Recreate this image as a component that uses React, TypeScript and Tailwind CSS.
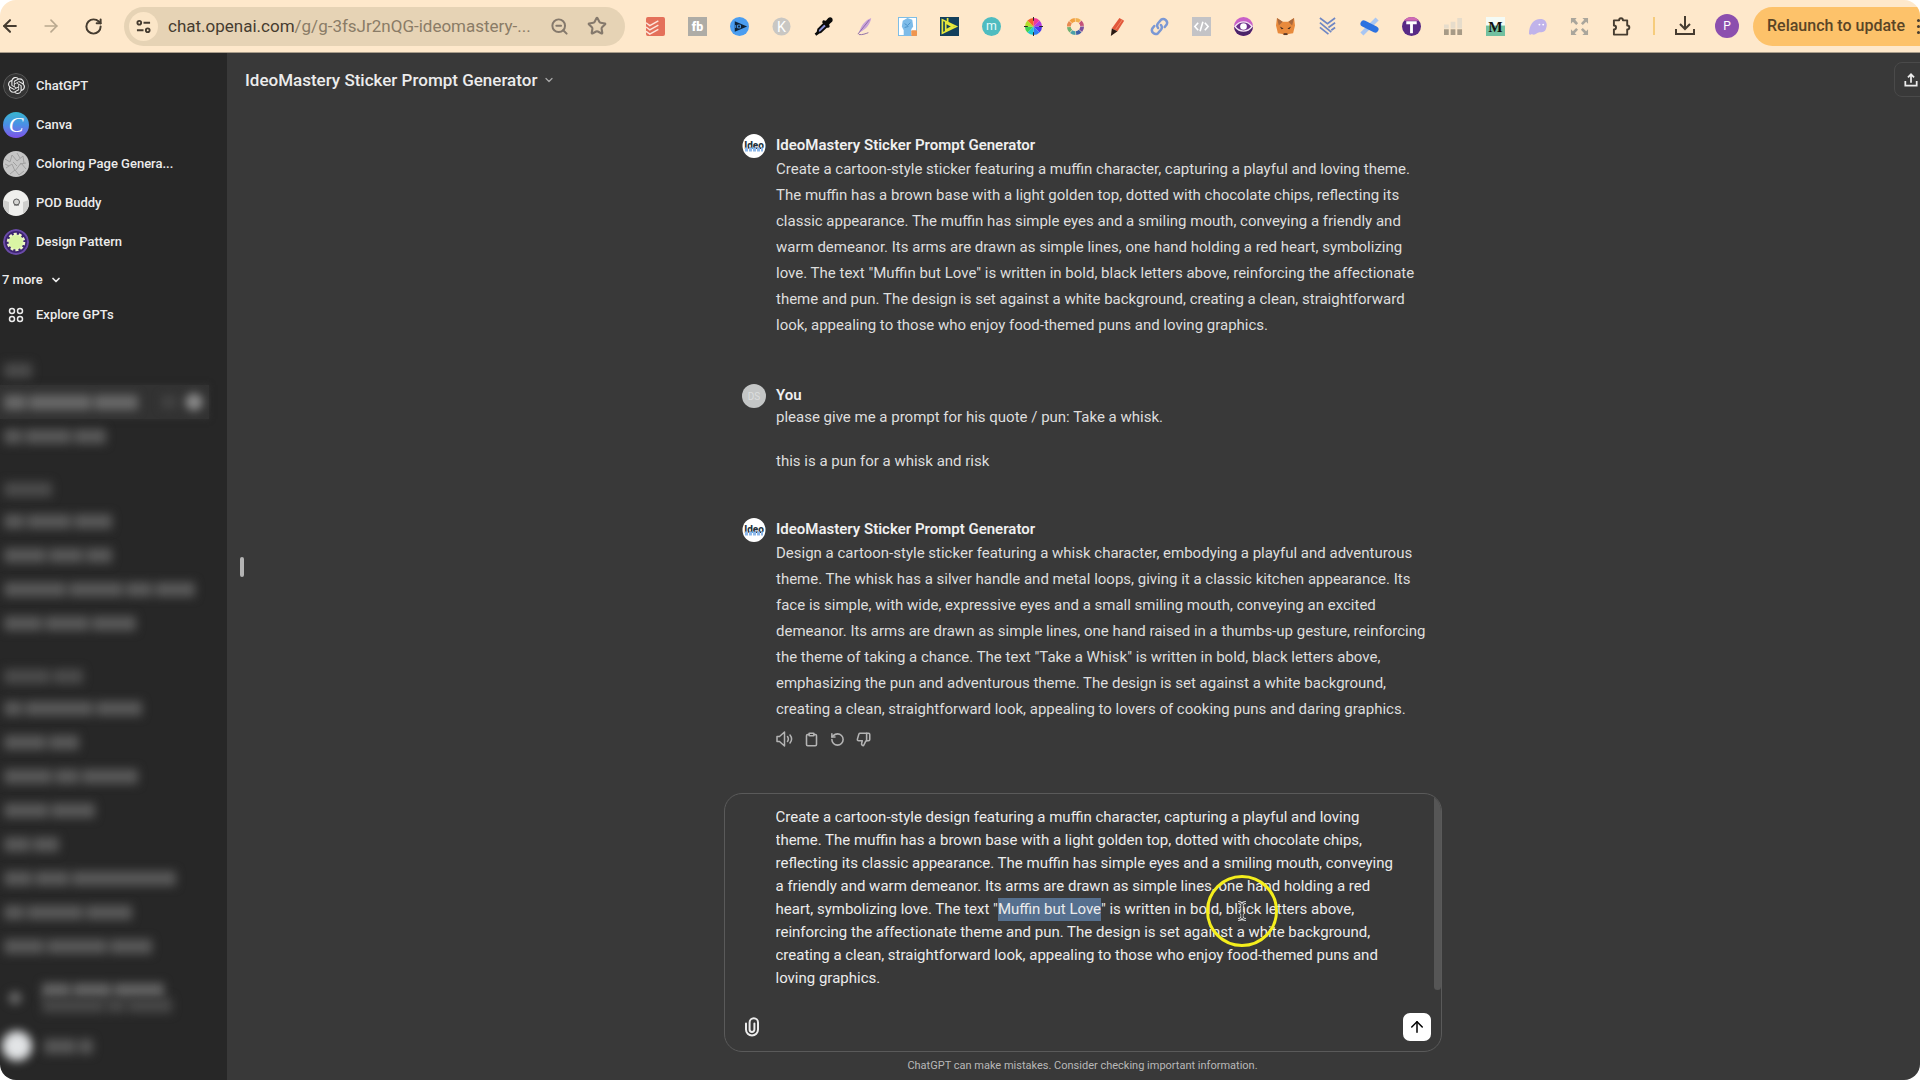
import { useEffect, useRef, type ReactNode } from "react";
import {
    ArrowLeft,
    ArrowRight,
    ArrowUp,
    ChevronDown,
    Clipboard,
    RotateCcw,
    RotateCw,
    Star,
    ThumbsDown,
    ZoomOut,
} from "lucide-react";
import { SiOpenai } from "react-icons/si";

const DRAFT =
    'Create a cartoon-style design featuring a muffin character, capturing a playful and loving theme. The muffin has a brown base with a light golden top, dotted with chocolate chips, reflecting its classic appearance. The muffin has simple eyes and a smiling mouth, conveying a friendly and warm demeanor. Its arms are drawn as simple lines, one hand holding a red heart, symbolizing love. The text "Muffin but Love" is written in bold, black letters above, reinforcing the affectionate theme and pun. The design is set against a white background, creating a clean, straightforward look, appealing to those who enjoy food-themed puns and loving graphics.';
const SELECTED = "Muffin but Love";

function Ext({ label, children }: { label: string; children: ReactNode }) {
    return (
        <button type="button" aria-label={label} className="shrink-0">
            <svg viewBox="0 0 20 20" className="h-[19px] w-[19px]">
                {children}
            </svg>
        </button>
    );
}

const wheel = ["#f0389a", "#b13be0", "#4a36f0", "#2e7ff5", "#1fc9d6", "#3fd452", "#b4dd2a", "#f5622a"];
const ring = ["#f0b050", "#c4527a", "#7a4f9e", "#3e5fa8", "#4aa0a8", "#6fb070", "#e88850", "#f2a040"];

function Extensions() {
    return (
        <div className="ml-[21px] flex items-center gap-[23px]">
            <Ext label="Todoist">
                <rect width="20" height="20" rx="2" fill="#e4705a" />
                <path d="M0 6l4 3 9-5M0 10.500l4 3 9-5M0 15l4 3 9-5" fill="none" stroke="#fde6dc" strokeWidth="1.500" />
            </Ext>
            <Ext label="Fb tool">
                <rect width="20" height="20" fill="#aeaca6" />
                <text x="10" y="15" textAnchor="middle" fontSize="13" fontWeight="900" fill="#fff">fb</text>
            </Ext>
            <Ext label="Video IQ">
                <circle cx="10" cy="10" r="10" fill="#4a9df0" />
                <path d="M5 4.500L18 10 5 15.500z" fill="#0f2236" />
                <path d="M6 8.500v3M8 8.500h3v3H8z" fill="none" stroke="#4a9df0" strokeWidth="1" />
            </Ext>
            <Ext label="Keywords">
                <circle cx="10" cy="10" r="9.500" fill="#c9c7c3" />
                <text x="10" y="15.500" textAnchor="middle" fontSize="15" fill="#fff">K</text>
            </Ext>
            <Ext label="Color picker">
                <path d="M3.500 17l1-4L11 6.500l3 3L7 16z" fill="#8b93dd" stroke="#0b0b0b" strokeWidth="2" />
                <path d="M1.500 18.500l3-2" stroke="#0b0b0b" strokeWidth="3" />
                <path d="M9.500 3.500l3 .5 2.500-3c3-2 6 1 4 4l-3 2.500.5 3-2 1L8.500 5.500z" fill="#0b0b0b" />
            </Ext>
            <Ext label="Quill">
                <path d="M3 17C5 9 10 3 16 1c-1 6-5 12-12 15z" fill="#c9a3d8" />
                <path d="M2 18L14 3M3 18.500c4 .5 7-1 10-2" fill="none" stroke="#8b6aa6" strokeWidth="1" />
            </Ext>
            <Ext label="Fist">
                <rect x=".5" y=".5" width="19" height="19" fill="#fff" stroke="#79bbe6" />
                <path d="M6 20v-6L4 10l1-6 5-3 5 2 1 7-2 3v7z" fill="#7dbbe8" />
                <path d="M7 7l3 2 3-3M7 11l4-1" stroke="#4a90c8" strokeWidth="1" fill="none" />
                <rect x="14" y="14" width="6" height="6" rx="1" fill="#f0954e" />
            </Ext>
            <Ext label="DS">
                <rect width="20" height="20" fill="#123f5c" />
                <path d="M2.500 3v14L17 10zM6 6v8l7-4z" fill="none" stroke="#e6e83c" strokeWidth="1.800" />
                <path d="M8 1v5" stroke="#e6e83c" strokeWidth="1.800" />
            </Ext>
            <Ext label="Merch">
                <circle cx="10" cy="10" r="10" fill="#4fbcc0" />
                <text x="10" y="14" textAnchor="middle" fontSize="13" fill="#e8fbfa">m</text>
            </Ext>
            <Ext label="Color wheel">
                {wheel.map((c, i) => (
                    <path key={c} d="M10 10L10 1A9 9 0 0 1 16.400 3.600z" fill={c} transform={`rotate(${i * 45} 10 10)`} />
                ))}
                <path d="M10 0v4M10 16v4M0 10h4M16 10h4" stroke="#222" strokeWidth="1" />
            </Ext>
            <Ext label="Color ring">
                {ring.map((c, i) => (
                    <path key={c} d="M10 3A7 7 0 0 1 14.500 4.600" fill="none" stroke={c} strokeWidth="4" transform={`rotate(${i * 45} 10 10)`} />
                ))}
            </Ext>
            <Ext label="Highlighter">
                <path d="M4 12L12 1l5 3-7 11z" fill="#e2573a" />
                <path d="M4 12l6 3-7 5z" fill="#2b1a14" />
                <path d="M8 13L15 3" stroke="#f08a68" strokeWidth="1" />
            </Ext>
            <Ext label="Copy link">
                <g fill="none" stroke="#7b98d4" strokeWidth="2.600" strokeLinecap="round">
                    <path d="M8.500 11.500a4 4 0 0 1 0-5l3-3.500a4 4 0 0 1 6 5l-2 2.500" />
                    <path d="M11.500 8.500a4 4 0 0 1 0 5l-3 3.500a4 4 0 0 1-6-5l2-2.500" />
                </g>
            </Ext>
            <Ext label="Code">
                <rect width="20" height="20" fill="#c3c3c6" />
                <path d="M6.500 6L3 10l3.500 4M13.500 6l3.500 4-3.500 4M11.500 5l-3 10" fill="none" stroke="#fff" strokeWidth="1.700" />
            </Ext>
            <Ext label="Eye">
                <circle cx="10" cy="10" r="10" fill="#c860c8" />
                <path d="M0 10h20a10 10 0 0 1-20 0z" fill="#4a2468" />
                <path d="M1 10c5-6.500 13-6.500 18 0-5 6.500-13 6.500-18 0z" fill="#6b2f8a" stroke="#f6e6f4" strokeWidth="1.500" />
                <circle cx="10" cy="10" r="3.500" fill="#fff" />
            </Ext>
            <Ext label="MetaMask">
                <path d="M1 1l6 4h6l6-4 1 8-2 8-5 1-1 1H8l-1-1-5-1-2-8z" fill="#e88a3c" />
                <path d="M1 1l6 4-4 4zM19 1l-6 4 4 4z" fill="#a9683c" />
                <path d="M4 10l4 2-2 1zM16 10l-4 2 2 1z" fill="#3a2a22" />
                <path d="M8 17h4v2H8z" fill="#5a3a2a" />
            </Ext>
            <Ext label="Layers">
                <path d="M2 1l8 6 8-6M18 6l-7 5M2 6l12 10M2 11l9 7M18 11l-4 3" fill="none" stroke="#6f87c4" strokeWidth="1.800" />
            </Ext>
            <Ext label="Pin">
                <path d="M2 18L18 2" stroke="#a9c6f2" strokeWidth="4.500" />
                <path d="M4 7l12 6" stroke="#2d72e0" strokeWidth="7" strokeLinecap="round" />
            </Ext>
            <Ext label="Texts">
                <circle cx="10" cy="10" r="10" fill="#582a86" />
                <path d="M2 4a10 10 0 0 1 16 0z" fill="#d06ab4" />
                <path d="M4.500 6h11M10 6v11" stroke="#fff" strokeWidth="3" />
            </Ext>
            <Ext label="Ranks">
                <path d="M0 13h5v6H0zM7 13h5v6H7zM14 13h5v6h-5z" fill="#a79a86" />
                <path d="M0 8h5v4H0zM7 5h5v7H7zM14 1h5v11h-5z" fill="#e6dccb" />
            </Ext>
            <Ext label="M tool">
                <rect width="20" height="20" fill="#f4fbf6" />
                <path d="M0 9h20v11H0z" fill="#72c0a0" />
                <text x="10" y="16" textAnchor="middle" fontSize="16" fontWeight="900" fontFamily="Liberation Serif" fill="#111">M</text>
            </Ext>
            <Ext label="Ghost">
                <path d="M1 18C1 8 6 2 13 2c6 0 8 5 6 10-1 4-4 4-7 4-3 0-4 4-8 2-1 1-2 1-3 0z" fill="#c0b3ea" />
                <circle cx="12" cy="8" r="1" fill="#fff" />
                <circle cx="16" cy="8" r="1" fill="#fff" />
            </Ext>
            <Ext label="Full page">
                <path d="M1 1h6L5.500 3l3 3.500-2 2L3 5 1 7zM19 1v6l-2-2-3.500 3.500-2-2L15 3l-2-2zM1 19v-6l2 2 3.500-3.500 2 2L5 17l2 2zM19 19h-6l2-2-3.500-3.500 2-2L17 15l2-2z" fill="#aaa69c" />
            </Ext>
            <Ext label="Extensions">
                <path d="M2 3.500h5.500c0-3 4-3 4 0H16V9c3 0 3 4 0 4v5.500H2V13c3 0 3-4 0-4z" fill="none" stroke="#463c30" strokeWidth="2" strokeLinejoin="round" />
            </Ext>
        </div>
    );
}

function BrowserBar() {
    return (
        <header className="flex h-[53px] shrink-0 items-center overflow-hidden border-b border-[#a89c8a] bg-[#fee8cb] text-[#463c30]">
            <button type="button" aria-label="Back"><ArrowLeft size={20} strokeWidth={2.5} /></button>
            <button type="button" aria-label="Forward" className="ml-[21px] text-[#b9a88f]"><ArrowRight size={20} strokeWidth={2} /></button>
            <button type="button" aria-label="Reload" className="ml-[23px]"><RotateCw size={19} strokeWidth={2.5} /></button>
            <div className="ml-[21px] flex h-[39px] w-[501px] shrink-0 items-center rounded-full bg-[#e6d3b5] pl-[5px]">
                <button type="button" aria-label="Site information" className="flex h-[29px] w-[29px] items-center justify-center rounded-full bg-[#fbe6c8]">
                    <svg viewBox="0 0 16 16" className="h-[15px] w-[15px]" fill="none" stroke="currentColor" strokeWidth="2">
                        <circle cx="3.500" cy="4" r="2" />
                        <path d="M8 4h7M1 12h7" />
                        <circle cx="12.500" cy="12" r="2" />
                    </svg>
                </button>
                <p className="ml-[10px] w-[378px] text-[17px] leading-6 whitespace-nowrap text-[#8a7c67]">
                    <span className="text-[#463c30]">chat.openai.com</span>/g/g-3fsJr2nQG-ideomastery-...
                </p>
                <button type="button" aria-label="Zoom" className="ml-1 text-[#85796c]"><ZoomOut size={19} strokeWidth={2.5} /></button>
                <button type="button" aria-label="Bookmark" className="ml-[18px] text-[#85796c]"><Star size={20} strokeWidth={2.5} /></button>
            </div>
            <Extensions />
            <span className="ml-[22px] h-[18px] w-0.5 shrink-0 bg-[#f6cc7c]" />
            <button type="button" aria-label="Downloads" className="ml-5 shrink-0">
                <svg viewBox="0 0 20 20" className="h-5 w-5" fill="none" stroke="currentColor" strokeWidth="2">
                    <path d="M10 0v12M5 8l5 5 5-5M1 13v5h18v-5" />
                </svg>
            </button>
            <button type="button" className="ml-5 flex h-6 w-6 shrink-0 items-center justify-center rounded-full bg-[#8c4fae] text-xs text-white">P</button>
            <button type="button" className="ml-[14px] flex h-[39px] grow items-center rounded-l-full bg-[#fdc26a] pl-[14px] text-base font-medium whitespace-nowrap text-[#5a4526]">
                Relaunch to update
                <span className="ml-3 flex flex-col gap-[3px]">
                    <span className="h-[3px] w-[3px] rounded-full bg-[#463c30]" />
                    <span className="h-[3px] w-[3px] rounded-full bg-[#463c30]" />
                    <span className="h-[3px] w-[3px] rounded-full bg-[#463c30]" />
                </span>
            </button>
        </header>
    );
}

function GptLink({ name, children }: { name: string; children: ReactNode }) {
    return (
        <a href="#" className="flex h-[39px] items-center gap-[7px] pl-[3px]">
            <span className="flex h-[26px] w-[26px] shrink-0 items-center justify-center overflow-hidden rounded-full">{children}</span>
            {name}
        </a>
    );
}

// word widths of the blurred history entries
const history = [
    { label: [28], rows: [[22, 62, 44], [18, 46, 32]] },
    { label: [48], rows: [[20, 44, 38], [42, 34, 26], [62, 54, 26, 40], [38, 44, 44]] },
    { label: [46, 30], rows: [[18, 68, 46], [42, 30], [48, 24, 56], [44, 44], [26, 26], [28, 34, 104], [20, 56, 46], [40, 60, 42]] },
];

function BlurredWords({ words, className }: { words: number[]; className: string }) {
    return (
        <span className="flex gap-[3px] blur-[5px]">
            {words.map((w, i) => (
                <span key={i} className={`h-[15px] ${className}`} style={{ width: w }} />
            ))}
        </span>
    );
}

function Sidebar() {
    return (
        <aside className="flex w-[227px] shrink-0 flex-col overflow-hidden bg-[#272727] pt-[13px] text-[13px] leading-5 font-medium text-[#ececec]">
            <nav>
                <GptLink name="ChatGPT">
                    <span className="flex h-full w-full items-center justify-center rounded-full border border-[#5a5a5a] bg-[#343434]">
                        <SiOpenai size={17} />
                    </span>
                </GptLink>
                <GptLink name="Canva">
                    <span className="flex h-full w-full items-center justify-center bg-linear-to-b from-[#38b6cf] via-[#4a8ee6] to-[#7a4fe8] font-['Liberation_Serif',serif] text-[22px] text-white italic">C</span>
                </GptLink>
                <GptLink name="Coloring Page Genera...">
                    <svg viewBox="0 0 26 26" className="h-full w-full" fill="none" stroke="#a0a0a0" strokeWidth="1">
                        <rect width="26" height="26" fill="#c6c6c6" stroke="none" />
                        <path d="M2 8l5 3 2-7 5 6 6-5 1 7M3 17l6-4 3 7 6-8 5 6M7 23l5-4 4 5 5-4M14 2l3 5M2 13l4 2M10 11l4 4M17 13l6-1" />
                    </svg>
                </GptLink>
                <GptLink name="POD Buddy">
                    <svg viewBox="0 0 26 26" className="h-full w-full">
                        <rect width="26" height="26" fill="#efefed" />
                        <path d="M0 10l6 2v14H0zM26 10l-6 2v14h6z" fill="#cfcfcd" />
                        <circle cx="13.500" cy="12" r="3" fill="#d5d5d3" stroke="#5a5a5a" />
                        <path d="M11 15h5" stroke="#5a5a5a" />
                    </svg>
                </GptLink>
                <GptLink name="Design Pattern">
                    <svg viewBox="0 0 26 26" className="h-full w-full">
                        <circle cx="13" cy="13" r="12" fill="#3c2470" stroke="#6a4ba8" strokeWidth="2" />
                        <circle cx="13" cy="13" r="7.500" fill="#d9f5a4" />
                        <circle cx="13" cy="13" r="8" fill="none" stroke="#eef8c8" strokeWidth="2.500" strokeDasharray="3 2.030" />
                    </svg>
                </GptLink>
                <button type="button" className="flex h-[38px] items-center gap-[7px] pl-[2px]">
                    7 more <ChevronDown size={12} strokeWidth={3.5} />
                </button>
                <a href="#" className="flex h-8 items-center gap-[7px] pl-[3px]">
                    <svg viewBox="0 0 26 26" className="h-[26px] w-[26px]" fill="none" stroke="currentColor" strokeWidth="1.500">
                        <circle cx="9" cy="9" r="2.500" />
                        <circle cx="17" cy="9" r="2.500" />
                        <circle cx="9" cy="17" r="2.500" />
                        <circle cx="17" cy="17" r="2.500" />
                    </svg>
                    Explore GPTs
                </a>
            </nav>

            <div className="mt-6 flex flex-col gap-[21px]" aria-hidden="true">
                {history.map((group, g) => (
                    <div key={g}>
                        <div className="flex h-[30px] items-center pl-1">
                            <BlurredWords words={group.label} className="bg-[#4a4a4a]" />
                        </div>
                        {group.rows.map((row, i) =>
                            g === 0 && i === 0 ? (
                                <div key={i} className="mr-[18px] flex h-[34px] items-center justify-between bg-[#323232] pr-[6px] pl-1 shadow-[0_0_6px_#323232]">
                                    <BlurredWords words={row} className="bg-[#686868]" />
                                    <span className="flex items-center gap-2 blur-[4px]">
                                        <span className="h-[14px] w-4 bg-[#404040]" />
                                        <span className="h-[18px] w-[18px] rounded-full bg-[#868686]" />
                                    </span>
                                </div>
                            ) : (
                                <div key={i} className="flex h-[34px] items-center pl-1">
                                    <BlurredWords words={row} className="bg-[#575757]" />
                                </div>
                            ),
                        )}
                    </div>
                ))}
            </div>

            <div className="mt-auto pb-[10px]" aria-hidden="true">
                <div className="flex h-12 items-center gap-5 pl-2">
                    <span className="h-[14px] w-[14px] rounded-full bg-[#606060] blur-[4px]" />
                    <div className="flex flex-col">
                        <BlurredWords words={[28, 38, 50]} className="bg-[#626262]" />
                        <BlurredWords words={[62, 18, 44]} className="bg-[#464646]" />
                    </div>
                </div>
                <div className="flex h-12 items-center gap-3 pl-[2px]">
                    <span className="h-[30px] w-[30px] rounded-full bg-[#e2e4e6] blur-[5px]" />
                    <BlurredWords words={[32, 14]} className="bg-[#555]" />
                </div>
            </div>
        </aside>
    );
}

function IdeoAvatar() {
    return (
        <svg viewBox="0 0 24 24" className="h-6 w-6">
            <ellipse cx="12" cy="12" rx="11.500" ry="12" fill="#fff" />
            <text x="12" y="15" textAnchor="middle" fontSize="10" fontWeight="800" fill="#22303c">Ideo</text>
            <path d="M3 15.500h18" stroke="#8db8ea" strokeWidth="4" strokeDasharray="3 1" />
        </svg>
    );
}

function Message({ avatar, name, children }: { avatar: ReactNode; name: string; children: ReactNode }) {
    return (
        <article className="flex gap-[10px]">
            <div className="h-6 w-6 shrink-0">{avatar}</div>
            <div className="w-[652px]">
                <h2 className="text-[15px] leading-[22px] font-semibold text-[#f0f0f0]">{name}</h2>
                {children}
            </div>
        </article>
    );
}

function Composer() {
    const ref = useRef<HTMLTextAreaElement>(null);

    useEffect(() => {
        const start = DRAFT.indexOf(SELECTED);
        ref.current?.focus();
        ref.current?.setSelectionRange(start, start + SELECTED.length);
    }, []);

    return (
        <form className="relative h-[259px] w-[718px] rounded-[18px] border border-[#5a5a5a]">
            <div className="relative h-[196px] overflow-hidden rounded-tr-[17px] pt-3 pl-[51px]">
                <textarea
                    ref={ref}
                    aria-label="Message"
                    rows={8}
                    defaultValue={DRAFT}
                    className="block w-[622px] resize-none overflow-hidden bg-transparent text-[15px] leading-[23px] text-[#ececec] outline-none selection:bg-[#56708f] selection:text-[#ececec]"
                />
                <span className="absolute top-0 right-0 h-full w-[7px] rounded-b-full bg-[#565656]" />
            </div>
            <div className="flex h-[58px] items-center justify-between pt-4 pr-[10px] pl-[17px]">
                <button type="button" aria-label="Attach files" className="text-[#ececec]">
                    <svg viewBox="0 0 20 20" className="h-5 w-5" fill="none" stroke="currentColor" strokeWidth="2" strokeLinecap="round">
                        <path d="M4 6.500v6a6 6 0 0 0 12 0V5.500a4.200 4.200 0 0 0-8.400 0v7a2.400 2.400 0 0 0 4.800 0V6.500" />
                    </svg>
                </button>
                <button type="submit" aria-label="Send message" className="flex h-7 w-7 items-center justify-center rounded-[7px] bg-white text-black">
                    <ArrowUp size={18} strokeWidth={2} />
                </button>
            </div>
            {/* click highlight around the pointer */}
            <div className="pointer-events-none absolute top-[81px] left-[481px] flex h-[72px] w-[72px] items-center justify-center rounded-full border-[3px] border-[#f4ee1c]">
                <svg viewBox="0 0 10 20" className="h-5 w-[10px]" fill="none">
                    <path d="M1 1.500c2 0 4 1 4 3v11c0 2-2 3-4 3M9 1.500c-2 0-4 1-4 3v11c0 2 2 3 4 3M3 12h4" stroke="#d8d8d8" strokeWidth="3" />
                    <path d="M1 1.500c2 0 4 1 4 3v11c0 2-2 3-4 3M9 1.500c-2 0-4 1-4 3v11c0 2 2 3 4 3M3 12h4" stroke="#222" strokeWidth="1" />
                </svg>
            </div>
        </form>
    );
}

export default function App() {
    return (
        <div className="bg-white">
            <div className="flex h-screen flex-col overflow-hidden rounded-[16px] font-['Roboto',sans-serif]">
                <BrowserBar />
                <div className="flex min-h-0 grow">
                    <Sidebar />
                    <div className="flex w-[18px] shrink-0 items-center bg-[#393939] pl-[13px]">
                        <button type="button" aria-label="Close sidebar" className="h-5 w-1 shrink-0 rounded-full bg-[#b4b4b4]" />
                    </div>
                    <main className="flex min-w-0 grow flex-col bg-[#393939] text-[#dedede]">
                        <div className="flex h-[53px] shrink-0 items-center justify-between overflow-hidden">
                            <button type="button" className="flex items-center gap-[6px] text-[17px] leading-6 font-medium text-[#ececec]">
                                IdeoMastery Sticker Prompt Generator
                                <ChevronDown size={12} strokeWidth={2.5} className="text-[#a8a8a8]" />
                            </button>
                            <button type="button" aria-label="Share" className="-mr-2 flex h-[35px] w-[34px] items-center justify-center rounded-lg border border-[#4a4a4a]">
                                <svg viewBox="0 0 16 16" className="h-[14px] w-[14px]" fill="none" stroke="#ececec" strokeWidth="2">
                                    <path d="M8 11V2M4.500 5L8 1.500 11.500 5M1.500 9v5.500h13V9" />
                                </svg>
                            </button>
                        </div>

                        <div className="mx-auto flex min-h-0 w-[717px] grow flex-col gap-[46px] overflow-hidden pt-7 pl-[18px] text-[15px]">
                            <Message avatar={<IdeoAvatar />} name="IdeoMastery Sticker Prompt Generator">
                                <p className="leading-[26px]">
                                    Create a cartoon-style sticker featuring a muffin character, capturing a playful and loving theme. The muffin
                                    has a brown base with a light golden top, dotted with chocolate chips, reflecting its classic appearance. The
                                    muffin has simple eyes and a smiling mouth, conveying a friendly and warm demeanor. Its arms are drawn as simple
                                    lines, one hand holding a red heart, symbolizing love. The text "Muffin but Love" is written in bold, black
                                    letters above, reinforcing the affectionate theme and pun. The design is set against a white background,
                                    creating a clean, straightforward look, appealing to those who enjoy food-themed puns and loving graphics.
                                </p>
                            </Message>

                            <Message
                                avatar={<span className="flex h-6 w-6 items-center justify-center rounded-full bg-[#c4c6c6] text-[10px] text-[#dcdede]">DS</span>}
                                name="You"
                            >
                                <p className="leading-[22px]">please give me a prompt for his quote / pun: Take a whisk.</p>
                                <p className="mt-[22px] leading-[22px]">this is a pun for a whisk and risk</p>
                            </Message>

                            <Message avatar={<IdeoAvatar />} name="IdeoMastery Sticker Prompt Generator">
                                <p className="leading-[26px]">
                                    Design a cartoon-style sticker featuring a whisk character, embodying a playful and adventurous theme. The whisk
                                    has a silver handle and metal loops, giving it a classic kitchen appearance. Its face is simple, with wide,
                                    expressive eyes and a small smiling mouth, conveying an excited demeanor. Its arms are drawn as simple lines,
                                    one hand raised in a thumbs-up gesture, reinforcing the theme of taking a chance. The text "Take a Whisk" is
                                    written in bold, black letters above, emphasizing the pun and adventurous theme. The design is set against a
                                    white background, creating a clean, straightforward look, appealing to lovers of cooking puns and daring
                                    graphics.
                                </p>
                                <div className="flex h-[34px] items-center gap-[11px] text-[#b4b4b4]">
                                    <button type="button" aria-label="Read aloud">
                                        <svg viewBox="0 0 17 16" className="h-4 w-[17px]" fill="none" stroke="currentColor" strokeWidth="1.500" strokeLinejoin="round" strokeLinecap="round">
                                            <path d="M1 5.500h2.500L8.500 1v14l-5-4.500H1zM11.500 5.500c1 1.500 1 3.500 0 5M14 4c2 2.500 2 5.500 0 8" />
                                        </svg>
                                    </button>
                                    <button type="button" aria-label="Copy"><Clipboard size={15} strokeWidth={2.5} /></button>
                                    <button type="button" aria-label="Regenerate"><RotateCcw size={15} strokeWidth={2.5} /></button>
                                    <button type="button" aria-label="Bad response"><ThumbsDown size={15} strokeWidth={2.5} /></button>
                                </div>
                            </Message>
                        </div>

                        <div className="mx-auto shrink-0">
                            <Composer />
                            <p className="flex h-7 items-center justify-center text-[11px] leading-4 text-[#b8b8b8]">
                                ChatGPT can make mistakes. Consider checking important information.
                            </p>
                        </div>
                    </main>
                </div>
            </div>
        </div>
    );
}
